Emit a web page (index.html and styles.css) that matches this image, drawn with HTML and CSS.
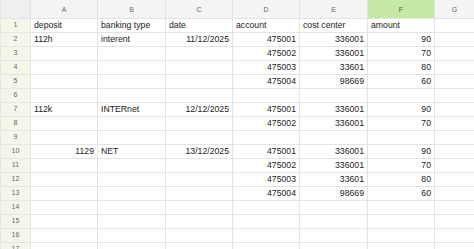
FILE: index.html
```html
<!DOCTYPE html>
<html>
<head>
  <title>Sheet</title>
  <link rel="stylesheet" href="styles.css">
</head>
<body>
  <table class="sheet">
    <colgroup>
      <col class="c-num">
      <col class="c-a">
      <col class="c-b">
      <col class="c-c">
      <col class="c-d">
      <col class="c-e">
      <col class="c-f">
      <col class="c-g">
    </colgroup>
    <tr class="head">
      <th class="corner"></th>
      <th>A</th><th>B</th><th>C</th><th>D</th><th>E</th><th class="active">F</th><th>G</th>
    </tr>
    <tr><th>1</th><td>deposit</td><td>banking type</td><td>date</td><td>account</td><td>cost center</td><td>amount</td><td></td></tr>
    <tr><th>2</th><td>112h</td><td>interent</td><td class="num">11/12/2025</td><td class="num">475001</td><td class="num">336001</td><td class="num">90</td><td></td></tr>
    <tr><th>3</th><td></td><td></td><td></td><td class="num">475002</td><td class="num">336001</td><td class="num">70</td><td></td></tr>
    <tr><th>4</th><td></td><td></td><td></td><td class="num">475003</td><td class="num">33601</td><td class="num">80</td><td></td></tr>
    <tr><th>5</th><td></td><td></td><td></td><td class="num">475004</td><td class="num">98669</td><td class="num">60</td><td></td></tr>
    <tr><th>6</th><td></td><td></td><td></td><td></td><td></td><td></td><td></td></tr>
    <tr><th>7</th><td>112k</td><td>INTERnet</td><td class="num">12/12/2025</td><td class="num">475001</td><td class="num">336001</td><td class="num">90</td><td></td></tr>
    <tr><th>8</th><td></td><td></td><td></td><td class="num">475002</td><td class="num">336001</td><td class="num">70</td><td></td></tr>
    <tr><th>9</th><td></td><td></td><td></td><td></td><td></td><td></td><td></td></tr>
    <tr><th>10</th><td class="num">1129</td><td>NET</td><td class="num">13/12/2025</td><td class="num">475001</td><td class="num">336001</td><td class="num">90</td><td></td></tr>
    <tr><th>11</th><td></td><td></td><td></td><td class="num">475002</td><td class="num">336001</td><td class="num">70</td><td></td></tr>
    <tr><th>12</th><td></td><td></td><td></td><td class="num">475003</td><td class="num">33601</td><td class="num">80</td><td></td></tr>
    <tr><th>13</th><td></td><td></td><td></td><td class="num">475004</td><td class="num">98669</td><td class="num">60</td><td></td></tr>
    <tr><th>14</th><td></td><td></td><td></td><td></td><td></td><td></td><td></td></tr>
    <tr><th>15</th><td></td><td></td><td></td><td></td><td></td><td></td><td></td></tr>
    <tr><th>16</th><td></td><td></td><td></td><td></td><td></td><td></td><td></td></tr>
    <tr><th>17</th><td></td><td></td><td></td><td></td><td></td><td></td><td></td></tr>
  </table>
</body>
</html>
```
FILE: styles.css
```css
* {
  box-sizing: border-box;
  margin: 0;
  padding: 0;
}

body {
  font-family: "Liberation Sans", Arial, sans-serif;
  background-color: #fff;
  overflow: hidden;
}

.sheet {
  border-collapse: collapse;
  table-layout: fixed;
  width: 474px;
}

.c-num { width: 30px; }
.c-a { width: 67px; }
.c-b { width: 68px; }
.c-c { width: 67px; }
.c-d { width: 67px; }
.c-e { width: 68px; }
.c-f { width: 67px; }
.c-g { width: 40px; }

.sheet td,
.sheet th {
  height: 14px;
  border: 1px solid #e3e3e3;
  font-size: 8.7px;
  line-height: 12px;
  color: #222;
  white-space: nowrap;
  overflow: hidden;
  padding: 0 3px;
  text-align: left;
  font-weight: normal;
}

.sheet tr:first-child th,
.sheet tr:first-child td {
  border-top: none;
}

.sheet th {
  background-color: #f5f6ea;
  color: #666;
  font-size: 7px;
  text-align: center;
  border-color: #e6e6dc;
}

.sheet .head th {
  height: 18px;
  background-color: #f4f4f4;
  border-color: #e2e2e2;
  padding-top: 2px;
}

.sheet .head th.corner {
  background-color: #efefef;
}

.sheet .head th.active {
  background-color: #c6e8a6;
  color: #555;
}

.sheet td.num {
  text-align: right;
}
```
